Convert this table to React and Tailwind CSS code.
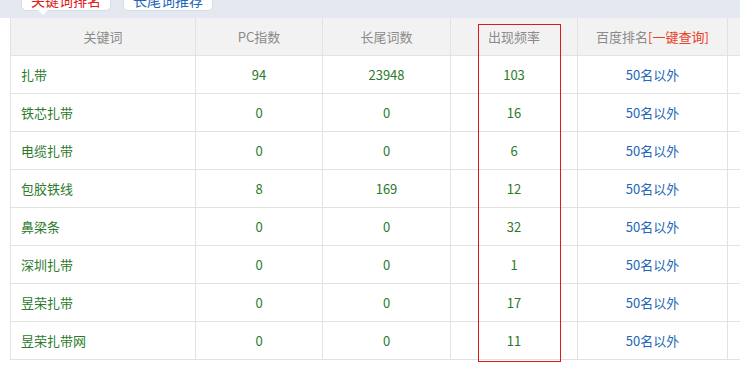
const rows = [
  ['扎带', '94', '23948', '103'],
  ['铁芯扎带', '0', '0', '16'],
  ['电缆扎带', '0', '0', '6'],
  ['包胶铁线', '8', '169', '12'],
  ['鼻梁条', '0', '0', '32'],
  ['深圳扎带', '0', '0', '1'],
  ['昱荣扎带', '0', '0', '17'],
  ['昱荣扎带网', '0', '0', '11'],
];

const cell = 'border-r border-b border-[#e2e2e2] flex items-center';

export default function App() {
  return (
    <div
      className="w-[740px] h-[366px] bg-white overflow-hidden text-[13px]"
      style={{ fontFamily: '"Microsoft YaHei", "Noto Sans CJK SC", sans-serif' }}
    >
      {/* tabs band */}
      <div className="h-[18px] bg-[#e4e8f0] relative">
        <div className="absolute left-[21px] top-[-12px] w-[90px] h-[23px] bg-white border border-[#d8dce4] rounded-[5px] flex items-end justify-center pb-[3px] text-[#e02020] text-[14px] leading-none">
          关键词排名
        </div>
        <div className="absolute left-[38px] top-[10px] w-0 h-0 border-l-[5px] border-r-[5px] border-t-[5px] border-l-transparent border-r-transparent border-t-white" />
        <div className="absolute left-[123px] top-[-12px] w-[90px] h-[23px] bg-white border border-[#d8dce4] rounded-[5px] flex items-end justify-center pb-[3px] text-[#2266b8] text-[14px] leading-none">
          长尾词推荐
        </div>
      </div>

      <div className="relative ml-[10px] border-l border-[#e2e2e2]">
        {/* header */}
        <div className="grid grid-cols-[185px_127px_128px_127px_150px_1fr] h-[38px] bg-[#f2f2f2] text-[#8a8a8a]">
          <div className={`${cell} justify-center`}>关键词</div>
          <div className={`${cell} justify-center`}>PC指数</div>
          <div className={`${cell} justify-center`}>长尾词数</div>
          <div className={`${cell} justify-center`}>出现频率</div>
          <div className={`${cell} justify-center`}>
            百度排名<span className="text-[#e8401c]">[一键查询]</span>
          </div>
          <div className="border-b border-[#e2e2e2]" />
        </div>
        {rows.map(([kw, pc, tail, freq]) => (
          <div key={kw} className="grid grid-cols-[185px_127px_128px_127px_150px_1fr] h-[38px] text-[#2b7a2b]">
            <div className={`${cell} pl-[10px]`}>{kw}</div>
            <div className={`${cell} justify-center`}>{pc}</div>
            <div className={`${cell} justify-center`}>{tail}</div>
            <div className={`${cell} justify-center`}>{freq}</div>
            <div className={`${cell} justify-center text-[#2266b8]`}>50名以外</div>
            <div className="border-b border-[#e2e2e2]" />
          </div>
        ))}
        {/* highlight box over the frequency column */}
        <div className="absolute left-[467px] top-[6px] w-[83px] h-[338px] border border-[#e01818]" />
      </div>
    </div>
  );
}
